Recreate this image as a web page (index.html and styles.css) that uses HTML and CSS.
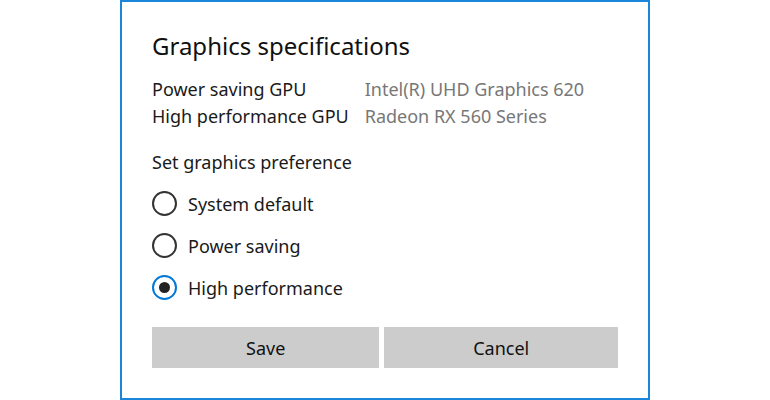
FILE: index.html
```html
<!DOCTYPE html>
<html lang="en">
<head>
<meta charset="utf-8">
<title>Graphics specifications</title>
<link rel="stylesheet" href="styles.css">
</head>
<body>
<div class="dialog">
  <h1 class="title">Graphics specifications</h1>
  <div class="specs">
    <span class="spec-label">Power saving GPU</span>
    <span class="spec-value">Intel(R) UHD Graphics 620</span>
    <span class="spec-label">High performance GPU</span>
    <span class="spec-value">Radeon RX 560 Series</span>
  </div>
  <div class="pref-heading">Set graphics preference</div>
  <div class="options">
    <div class="option"><span class="radio"></span><span class="option-label">System default</span></div>
    <div class="option"><span class="radio"></span><span class="option-label">Power saving</span></div>
    <div class="option"><span class="radio radio-checked"></span><span class="option-label">High performance</span></div>
  </div>
  <div class="buttons">
    <div class="btn">Save</div>
    <div class="btn">Cancel</div>
  </div>
</div>
</body>
</html>
```

FILE: styles.css
```css
html, body {
  margin: 0;
  padding: 0;
  background: #ffffff;
}
body {
  font-family: "Noto Sans", "Open Sans", sans-serif;
  color: #1a1a1a;
  display: flex;
  justify-content: center;
}
.dialog {
  box-sizing: border-box;
  width: 530px;
  height: 400px;
  border: 2px solid #1a86d9;
  padding: 0 30px;
  display: flex;
  flex-direction: column;
}
.title {
  margin: 27px 0 0 0;
  font-weight: 400;
  font-size: 24px;
  line-height: 34px;
  color: #111;
}
.specs {
  margin-top: 13px;
  display: grid;
  grid-template-columns: auto 1fr;
  column-gap: 16px;
  font-size: 18px;
  line-height: 27px;
}
.spec-value {
  color: #777777;
}
.pref-heading {
  margin-top: 19px;
  font-size: 18px;
  line-height: 27px;
}
.options {
  margin-top: 15px;
  display: flex;
  flex-direction: column;
  gap: 17px;
}
.option {
  display: flex;
  align-items: center;
  gap: 11px;
  height: 25px;
  font-size: 18px;
}
.radio {
  box-sizing: border-box;
  width: 25px;
  height: 25px;
  border: 2px solid #333333;
  border-radius: 50%;
  display: flex;
  align-items: center;
  justify-content: center;
}
.radio-checked {
  border-color: #0078d7;
}
.radio-checked::after {
  content: "";
  width: 11px;
  height: 11px;
  border-radius: 50%;
  background: #222222;
}
.buttons {
  margin-top: 27px;
  display: grid;
  grid-template-columns: 227fr 233fr;
  gap: 5px;
}
.btn {
  height: 41px;
  background: #cccccc;
  display: flex;
  align-items: center;
  justify-content: center;
  font-size: 18px;
  color: #111;
}
```
